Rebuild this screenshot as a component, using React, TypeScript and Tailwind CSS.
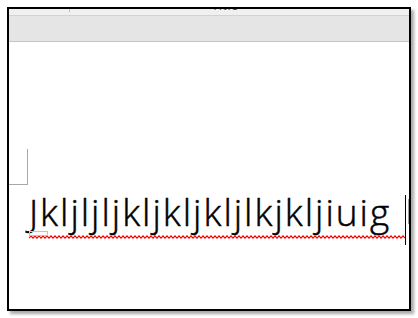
import React from "react";

function Squiggle({ width }: { width: number }) {
  const pts: string[] = [];
  for (let x = 0; x <= width; x += 2) {
    pts.push(`${x},${(x / 2) % 2 === 0 ? 3.2 : 0.8}`);
  }
  return (
    <svg width={width} height={4} className="block">
      <polyline points={pts.join(" ")} fill="none" stroke="#ff0000" strokeWidth={1.1} />
    </svg>
  );
}

export default function App() {
  return (
    <div className="w-[418px] h-[318px] bg-white pt-[7px] pl-[7px] overflow-hidden">
      <div className="w-[404px] h-[304px] border-2 border-black bg-white flex flex-col shadow-[3px_3px_3px_rgba(0,0,0,0.35)] overflow-hidden">
        <div className="h-[7px] bg-[#f0f0f0] border-b border-[#d3d3d3] flex items-start overflow-hidden">
          <div className="ml-[60px] w-px h-[3px] bg-[#c0c0c0] shrink-0" />
          <div
            className="ml-[142px] -mt-[9px] text-[11px] leading-none text-[#333] tracking-[1px] shrink-0"
            style={{ fontFamily: "'Open Sans', sans-serif" }}
          >
            Title
          </div>
        </div>
        <div className="h-[26px] bg-[#e5e5e5] border-b border-[#c6c6c6]" />
        <div className="flex-1 flex flex-col pt-[107px]">
          <div className="w-[19px] h-[36px] border-r border-b border-[#a8a8a8]" />
          <div className="ml-[20px] mt-[5px] flex items-start">
            <div className="relative">
              <div
                className="text-[37px] leading-[44px] font-light text-black whitespace-nowrap tracking-[2px] [-webkit-text-stroke:0.5px_black]"
                style={{ fontFamily: "'Open Sans', sans-serif" }}
              >
                Jkljljljkljkljkljlkjkljiuig
              </div>
              <div className="absolute left-0 top-[45px]">
                <Squiggle width={377} />
              </div>
              <div className="absolute left-0 top-[41px] w-[19px] h-[5px] border border-[#a8c8f0]" />
            </div>
            <div className="flex-1" />
            <div className="mt-[5px] w-px h-[50px] bg-black" />
            <div className="ml-[2px] mt-[9px] w-px h-[25px] bg-[#a0a0a0]" />
          </div>
        </div>
      </div>
    </div>
  );
}
